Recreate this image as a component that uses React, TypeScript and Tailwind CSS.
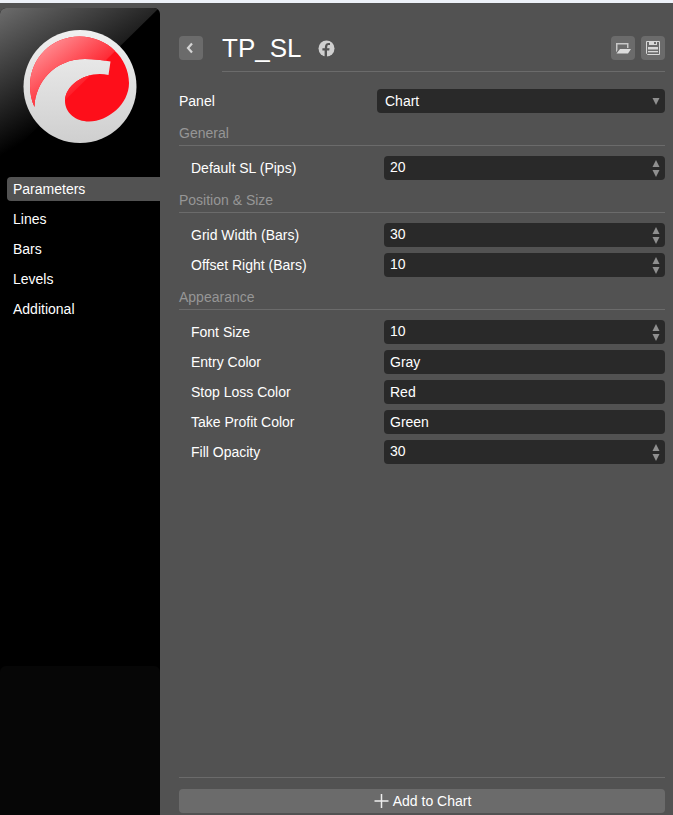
import { useId, useState } from 'react';
import type { ReactNode } from 'react';

const TABS = ['Parameters', 'Lines', 'Bars', 'Levels', 'Additional'];

interface Field {
  label: string;
  value: string;
  kind: 'number' | 'text';
}

interface Section {
  title: string;
  fields: Field[];
}

const SECTIONS: Section[] = [
  {
    title: 'General',
    fields: [{ label: 'Default SL (Pips)', value: '20', kind: 'number' }],
  },
  {
    title: 'Position & Size',
    fields: [
      { label: 'Grid Width (Bars)', value: '30', kind: 'number' },
      { label: 'Offset Right (Bars)', value: '10', kind: 'number' },
    ],
  },
  {
    title: 'Appearance',
    fields: [
      { label: 'Font Size', value: '10', kind: 'number' },
      { label: 'Entry Color', value: 'Gray', kind: 'text' },
      { label: 'Stop Loss Color', value: 'Red', kind: 'text' },
      { label: 'Take Profit Color', value: 'Green', kind: 'text' },
      { label: 'Fill Opacity', value: '30', kind: 'number' },
    ],
  },
];

// The red part of the disc: a crescent on the left that runs round into the drop.
const SWIRL =
  'M34.500 99C31.500 93 30 85 30 78C30 50 52 28.500 79.500 28.500C107 28.500 129 50 129 75C129 96 108 113.500 89 113.500C76 113.500 65 105 65 93C65 76 88 62 108.500 67L110.500 53.500C102 52 94 51 85 51C54 51 35 75 34.500 99Z';

function Logo() {
  return (
    <svg viewBox="0 0 160 160" className="block w-full" role="img" aria-label="cTrader">
      <defs>
        <linearGradient id="sheen" gradientUnits="userSpaceOnUse" x1="0" y1="0" x2="66" y2="108">
          <stop offset="0" stopColor="#6c6c6c" />
          <stop offset="1" stopColor="#000" />
        </linearGradient>
        <linearGradient id="ring" x1="0" y1="0" x2="0" y2="1">
          <stop offset="0" stopColor="#f0f0f0" />
          <stop offset="1" stopColor="#cfcfcf" />
        </linearGradient>
        <linearGradient id="gloss" gradientUnits="userSpaceOnUse" x1="46" y1="36" x2="84" y2="86">
          <stop offset="0" stopColor="#ff8c91" />
          <stop offset="1" stopColor="#fe0e1a" />
        </linearGradient>
        <clipPath id="swirl">
          <path d={SWIRL} />
        </clipPath>
      </defs>
      <path d="M0 0H159L0 156Z" fill="url(#sheen)" />
      <circle cx="80" cy="78.500" r="56.500" fill="url(#ring)" />
      <path d={SWIRL} fill="#fe0e1a" />
      <path d="M0 0H159L0 156Z" fill="url(#gloss)" clipPath="url(#swirl)" />
    </svg>
  );
}

function IconButton({ label, children }: Readonly<{ label: string; children: ReactNode }>) {
  return (
    <button
      type="button"
      aria-label={label}
      className="grid size-6 shrink-0 place-items-center rounded bg-[#6b6b6b] text-[#d4d4d4]"
    >
      {children}
    </button>
  );
}

function FieldRow({ label, value, kind }: Readonly<Field>) {
  const id = useId();
  const [current, setCurrent] = useState(value);
  const step = (by: number) => setCurrent(String(Number(current) + by));

  return (
    <div className="flex h-6 items-center">
      <label htmlFor={id} className="w-[205px] shrink-0 pl-3">
        {label}
      </label>
      <div className="flex h-full min-w-0 flex-1 rounded bg-[#292929]">
        <input
          id={id}
          type="text"
          inputMode={kind === 'number' ? 'numeric' : 'text'}
          value={current}
          onChange={(e) => setCurrent(e.target.value)}
          className={`h-full min-w-0 flex-1 bg-transparent px-1.5 outline-none ${kind === 'number' ? 'pb-0.5' : ''}`}
        />
        {kind === 'number' ? (
          <div className="flex w-[18px] flex-col items-center justify-center gap-[3px]">
            <button type="button" aria-label={`Increase ${label}`} onClick={() => step(1)}>
              <svg viewBox="0 0 8 7" className="block h-[7px] w-2 fill-[#8f8f8f]" aria-hidden>
                <path d="M4 0L7.500 7H0.500Z" />
              </svg>
            </button>
            <button type="button" aria-label={`Decrease ${label}`} onClick={() => step(-1)}>
              <svg viewBox="0 0 8 7" className="block h-[7px] w-2 fill-[#8f8f8f]" aria-hidden>
                <path d="M0.500 0H7.500L4 7Z" />
              </svg>
            </button>
          </div>
        ) : null}
      </div>
    </div>
  );
}

function Sidebar() {
  const [active, setActive] = useState(TABS[0]);

  return (
    <aside className="mt-[5px] flex w-40 shrink-0 flex-col overflow-hidden rounded-t-md bg-black">
      <Logo />
      <nav className="mt-[9px] flex flex-col gap-1.5 pl-[7px]">
        {TABS.map((tab) => (
          <button
            key={tab}
            type="button"
            onClick={() => setActive(tab)}
            className={`h-6 rounded-l px-1.5 text-left ${tab === active ? 'bg-[#525252]' : ''}`}
          >
            {tab}
          </button>
        ))}
      </nav>
      <div className="mt-auto h-[149px] rounded-t-md bg-[#060606]" />
    </aside>
  );
}

export default function App() {
  return (
    <div className="flex min-h-screen flex-col border-t-[3px] border-[#edf1f8] bg-[#525252] font-['Liberation_Sans',Arial,sans-serif] text-[14px] leading-4 text-white">
      <div className="flex flex-1">
        <Sidebar />
        <main className="flex min-w-0 flex-1 flex-col pt-[33px] pr-2 pb-0.5 pl-[19px]">
          <header className="flex">
            <IconButton label="Back">
              <svg viewBox="0 0 24 24" className="size-6" fill="none" stroke="currentColor" strokeWidth="2.2" aria-hidden>
                <path d="M13 7.500L9 12L13 16.500" />
              </svg>
            </IconButton>
            <div className="ml-[19px] flex h-9 flex-1 border-b border-[#6b6b6b]">
              <h1 className="text-[26px] leading-6">TP_SL</h1>
              <a href="#facebook" aria-label="Facebook" className="ml-4 h-6 pt-1">
                <svg viewBox="0 0 17 17" className="size-[17px]" aria-hidden>
                  <circle cx="8.500" cy="8.500" r="8" fill="#cfcfcf" />
                  <path
                    d="M6.600 17V10.600H4.400V8.300H6.800L7 6.300C7.200 4.100 8.600 2.900 10.600 2.900H12V5H10.800C9.900 5 9.400 5.500 9.300 6.300L9.100 8.300H11.600L11.200 10.600H9V17Z"
                    fill="#525252"
                  />
                </svg>
              </a>
              <div className="ml-auto flex gap-1.5">
                <IconButton label="Open">
                  <svg viewBox="0 0 24 24" className="size-6" aria-hidden>
                    <path d="M5 7H17.500V12H16V8.500H6.500V14L5 16.500Z" fill="#c8c8c8" />
                    <path d="M9 13H20L17 17.500H5.500Z" fill="#dcdcdc" />
                  </svg>
                </IconButton>
                <IconButton label="Save">
                  <svg viewBox="0 0 24 24" className="size-6" aria-hidden>
                    <path d="M5.500 5.500H18.500V18.500H6.500L5.500 17.500Z" fill="none" stroke="#d8d8d8" />
                    <path d="M8 5H16V9H8Z" fill="#d8d8d8" />
                    <path d="M13 6H15V8H13Z" fill="#6b6b6b" />
                    <path d="M7 11H17V13H7Z" fill="#d8d8d8" />
                    <path d="M7 13H17V14H7Z" fill="#a0a0a0" />
                    <path d="M7 15H17V16H7Z" fill="#d8d8d8" />
                    <path d="M7 16H17V17H7Z" fill="#8c8c8c" />
                  </svg>
                </IconButton>
              </div>
            </div>
          </header>

          <div className="mt-[17px] flex items-center">
            <label htmlFor="panel" className="w-[198px] shrink-0">
              Panel
            </label>
            <div className="relative h-6 min-w-0 flex-1">
              <select
                id="panel"
                className="block h-6 w-full appearance-none rounded bg-[#292929] px-2 outline-none"
                defaultValue="Chart"
              >
                <option>Chart</option>
              </select>
              <svg
                viewBox="0 0 8 7"
                className="pointer-events-none absolute top-[9px] right-[5px] h-[7px] w-2 fill-[#8f8f8f]"
                aria-hidden
              >
                <path d="M0.500 0H7.500L4 7Z" />
              </svg>
            </div>
          </div>

          {SECTIONS.map((section) => (
            <section key={section.title} className="mt-2">
              <h2 className="mb-2.5 border-b border-[#6b6b6b] py-1 text-[#969696]">{section.title}</h2>
              <div className="flex flex-col gap-1.5">
                {section.fields.map((field) => (
                  <FieldRow key={field.label} {...field} />
                ))}
              </div>
            </section>
          ))}

          <footer className="mt-auto border-t border-[#6b6b6b] pt-[11px]">
            <button
              type="button"
              className="flex h-6 w-full items-center justify-center gap-1 rounded bg-[#6b6b6b]"
            >
              <svg viewBox="0 0 16 16" className="size-4" fill="none" stroke="#eee" strokeWidth="1.5" aria-hidden>
                <path d="M8.500 1V15M1.500 8H15.500" />
              </svg>
              Add to Chart
            </button>
          </footer>
        </main>
      </div>
    </div>
  );
}
